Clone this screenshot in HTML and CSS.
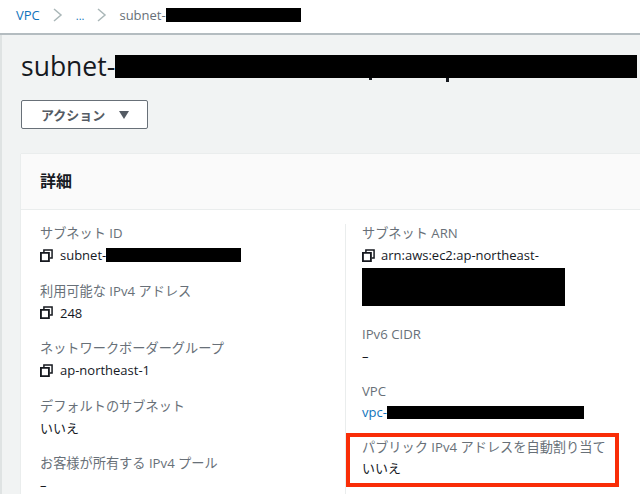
FILE: index.html
```html
<!DOCTYPE html>
<html lang="ja">
<head>
<meta charset="utf-8">
<title>subnet</title>
<link rel="stylesheet" href="styles.css">
</head>
<body>
<svg class="sprite" width="0" height="0"><defs><g id="copy"><path d="M1 4.2h8.6v8.8H1z" fill="none" stroke="currentColor" stroke-width="2"/><path d="M4.2 3.6V1h8.8v8.6h-2.6" fill="none" stroke="currentColor" stroke-width="1.6"/></g></defs></svg>
<div class="page">
  <nav class="crumbs">
    <a class="link">VPC</a>
    <svg class="chev" viewBox="0 0 10 14"><path d="M1 1l7 6-7 6" fill="none" stroke="#aab7b8" stroke-width="1.5"/></svg>
    <a class="link dots">...</a>
    <svg class="chev" viewBox="0 0 10 14"><path d="M1 1l7 6-7 6" fill="none" stroke="#aab7b8" stroke-width="1.5"/></svg>
    <span class="crumb-current">subnet-</span><span class="redact crumb-redact"></span>
  </nav>
  <main class="content">
    <h1 class="title">subnet-<span class="redact title-redact"></span></h1>
    <button class="action">アクション<span class="caret"></span></button>
    <section class="card">
      <header class="card-head"><h2>詳細</h2></header>
      <div class="card-body">
        <div class="col">
          <div class="field">
            <div class="label">サブネット ID</div>
            <div class="value"><svg class="copy" viewBox="0 0 14 14"><use href="#copy"/></svg>subnet-<span class="redact id-redact"></span></div>
          </div>
          <div class="field">
            <div class="label">利用可能な IPv4 アドレス</div>
            <div class="value"><svg class="copy" viewBox="0 0 14 14"><use href="#copy"/></svg>248</div>
          </div>
          <div class="field">
            <div class="label">ネットワークボーダーグループ</div>
            <div class="value"><svg class="copy" viewBox="0 0 14 14"><use href="#copy"/></svg>ap-northeast-1</div>
          </div>
          <div class="field">
            <div class="label">デフォルトのサブネット</div>
            <div class="value">いいえ</div>
          </div>
          <div class="field">
            <div class="label">お客様が所有する IPv4 プール</div>
            <div class="value">–</div>
          </div>
        </div>
        <div class="col col-right">
          <div class="field field-arn">
            <div class="label">サブネット ARN</div>
            <div class="value"><svg class="copy" viewBox="0 0 14 14"><use href="#copy"/></svg>arn:aws:ec2:ap-northeast-</div>
            <div class="redact arn-redact"></div>
          </div>
          <div class="field field-short">
            <div class="label">IPv6 CIDR</div>
            <div class="value">–</div>
          </div>
          <div class="field field-short">
            <div class="label">VPC</div>
            <div class="value value-link">vpc-<span class="redact vpc-redact"></span></div>
          </div>
          <div class="field field-marked">
            <div class="label">パブリック IPv4 アドレスを自動割り当て</div>
            <div class="value">いいえ</div>
          </div>
        </div>
      </div>
    </section>
  </main>
</div>
</body>
</html>
```
FILE: styles.css
```css
* { box-sizing: border-box; }
html, body { margin: 0; height: 100%; overflow: hidden; }
body {
  background: #fff;
  font-family: "Open Sans", "Noto Sans CJK JP", sans-serif;
  color: #16191f;
}
.sprite { position: absolute; }
.page { height: 494px; display: flex; flex-direction: column; }
.crumbs {
  height: 35px;
  flex: none;
  display: flex;
  align-items: center;
  padding: 0 0 3px 16px;
  background: #fff;
  border-bottom: 2px solid #b4bcc0;
  font-size: 13px;
}
.link { color: #0f73bb; }
.dots { font-size: 11px; }
.chev { width: 10px; height: 14px; margin-left: 13px; }
.chev + .dots { margin-left: 13px; }
.crumb-current { color: #687078; margin-left: 12px; }
.redact { display: inline-block; background: #000; }
.crumb-redact { width: 135px; height: 14px; }
.content {
  flex: 1;
  background: #f1f3f3;
  border-left: 2px solid #dfe3e3;
  padding: 0 0 0 19px;
  min-height: 0;
}
.title {
  margin: 11px 0 0;
  height: 40px;
  font-size: 26.5px;
  line-height: 40px;
  font-weight: 400;
  white-space: nowrap;
  display: flex;
  align-items: center;
}
.title-redact { position: relative; width: 522px; height: 23px; flex: none; }
.title-redact::before,
.title-redact::after {
  content: "";
  position: absolute;
  top: 23px;
  width: 3px;
  background: #16191f;
}
.title-redact::before { left: 254px; height: 2px; }
.title-redact::after { left: 331px; height: 4px; }
.action {
  display: flex;
  align-items: center;
  width: 127px;
  height: 29px;
  margin-top: 14px;
  padding: 0 0 0 19px;
  background: #fff;
  border: 1px solid #687078;
  border-radius: 2px;
  font: 700 13px "Noto Sans CJK JP", sans-serif;
  color: #545b64;
}
.caret {
  width: 0;
  height: 0;
  margin-left: 14px;
  border-left: 5.5px solid transparent;
  border-right: 5.5px solid transparent;
  border-top: 8px solid #545b64;
}
.card {
  margin-top: 25px;
  height: 345px;
  background: #fff;
  box-shadow: 0 0 1px #c8ced0;
}
.card-head {
  height: 56px;
  background: #fafafa;
  border-bottom: 1px solid #eaeded;
  padding: 0 0 3px 19px;
  display: flex;
  align-items: center;
}
.card-head h2 { margin: 0; font: 700 16px "Noto Sans CJK JP", sans-serif; color: #16191f; }
.card-body { display: flex; padding-top: 14px; }
.col { width: 324px; flex: none; padding-left: 19px; margin-top: -2px; }
.col-right { flex: 1; border-left: 1px solid #eaeded; padding: 0; height: 275px; margin-top: 0; }
.field { height: 57.5px; }
.label, .value { height: 22px; line-height: 22px; font-size: 13px; white-space: nowrap; }
.label { color: #687078; font-size: 13.2px; }
.value { display: flex; align-items: center; color: #16191f; }
.value-link { color: #0f73bb; height: 20px; line-height: 20px; }
.copy { width: 13px; height: 13px; margin-right: 7px; flex: none; color: #16191f; }
.id-redact { width: 135px; height: 14px; }
.col-right .copy { margin-right: 6px; }
.col-right .field { padding-left: 16px; }
.col-right .field-arn { height: 101px; margin-top: -2px; }
.arn-redact { width: 203px; height: 38px; display: block; margin-top: 2px; }
.field-short { height: 57px; }
.vpc-redact { width: 197px; height: 13px; }
.col-right .field-marked {
  height: 54px;
  width: 273px;
  margin-top: -4px;
  padding: 0 0 0 12px;
  border: 4px solid #f92d07;
}
.field-marked .label, .field-marked .value { height: 21px; line-height: 21px; }
```
